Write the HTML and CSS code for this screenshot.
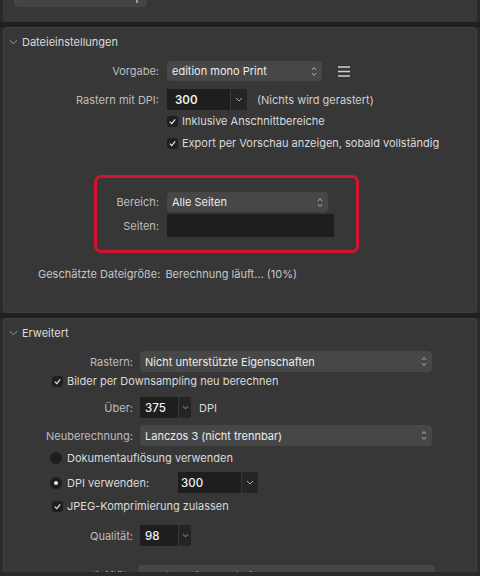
FILE: index.html
```html
<!DOCTYPE html>
<html lang="de">
<head>
<meta charset="utf-8">
<link rel="stylesheet" href="styles.css">
</head>
<body>
<div class="stub">
  <div class="stub-popup"><span class="stub-arrow"></span></div>
</div>
<div class="sep"></div>

<section class="panel p1">
  <div class="head"><svg class="chev" viewBox="0 0 10 6" width="9" height="6"><path d="M1 1 L5 5 L9 1" fill="none" stroke="#9a9a9a" stroke-width="1.1"/></svg>Dateieinstellungen</div>

  <div class="row r-vorgabe">
    <label class="lbl w1">Vorgabe:</label>
    <div class="popup pop-vorgabe"><span>edition mono Print</span><svg class="updown" viewBox="0 0 6 11" width="6" height="11"><path d="M1 4 L3 1.5 L5 4 M1 7 L3 9.5 L5 7" fill="none" stroke="#aaa" stroke-width="1"/></svg></div>
    <svg class="menu" viewBox="0 0 12 11" width="12" height="11"><path d="M0 1 H12 M0 5.5 H12 M0 10 H12" stroke="#cfcfcf" stroke-width="1.6"/></svg>
  </div>

  <div class="row r-dpi">
    <label class="lbl w1">Rastern mit DPI:</label>
    <div class="combo"><div class="field f-dpi">300</div><div class="drop"><svg viewBox="0 0 8 5" width="8" height="5"><path d="M1 1 L4 4 L7 1" fill="none" stroke="#aaa" stroke-width="1"/></svg></div></div>
    <span class="note">(Nichts wird gerastert)</span>
  </div>

  <div class="row cbrow indent1"><span class="cb"><svg viewBox="0 0 10 10" width="9" height="9"><path d="M2 5.2 L4.2 7.4 L8 2.6" fill="none" stroke="#e8e8e8" stroke-width="1.3"/></svg></span><span class="val">Inklusive Anschnittbereiche</span></div>
  <div class="row cbrow indent1"><span class="cb"><svg viewBox="0 0 10 10" width="9" height="9"><path d="M2 5.2 L4.2 7.4 L8 2.6" fill="none" stroke="#e8e8e8" stroke-width="1.3"/></svg></span><span class="val">Export per Vorschau anzeigen, sobald vollständig</span></div>

  <div class="redbox">
    <div class="row r-bereich">
      <label class="lbl w2">Bereich:</label>
      <div class="popup pop-bereich"><span>Alle Seiten</span><svg class="updown" viewBox="0 0 6 11" width="6" height="11"><path d="M1 4 L3 1.5 L5 4 M1 7 L3 9.5 L5 7" fill="none" stroke="#aaa" stroke-width="1"/></svg></div>
    </div>
    <div class="row r-seiten">
      <label class="lbl w2">Seiten:</label>
      <div class="field f-seiten"></div>
    </div>
  </div>

  <div class="size"><span class="lbl2">Geschätzte Dateigröße:</span><span class="lbl2">Berechnung läuft… (10%)</span></div>
</section>

<div class="sep"></div>

<section class="panel p2">
  <div class="head"><svg class="chev" viewBox="0 0 10 6" width="9" height="6"><path d="M1 1 L5 5 L9 1" fill="none" stroke="#9a9a9a" stroke-width="1.1"/></svg>Erweitert</div>

  <div class="row r-rastern">
    <label class="lbl w3">Rastern:</label>
    <div class="popup pop-wide"><span>Nicht unterstützte Eigenschaften</span><svg class="updown" viewBox="0 0 6 11" width="6" height="11"><path d="M1 4 L3 1.5 L5 4 M1 7 L3 9.5 L5 7" fill="none" stroke="#aaa" stroke-width="1"/></svg></div>
  </div>

  <div class="row cbrow2 r-down"><span class="cb"><svg viewBox="0 0 10 10" width="9" height="9"><path d="M2 5.2 L4.2 7.4 L8 2.6" fill="none" stroke="#e8e8e8" stroke-width="1.3"/></svg></span><span class="val">Bilder per Downsampling neu berechnen</span></div>

  <div class="row r-ueber">
    <label class="lbl w3">Über:</label>
    <div class="combo small"><div class="field f-small">375</div><div class="drop dsm"><svg viewBox="0 0 8 5" width="7" height="5"><path d="M1 1 L4 4 L7 1" fill="none" stroke="#aaa" stroke-width="1"/></svg></div></div>
    <span class="val unit">DPI</span>
  </div>

  <div class="row r-neu">
    <label class="lbl w3">Neuberechnung:</label>
    <div class="popup pop-wide"><span>Lanczos 3 (nicht trennbar)</span><svg class="updown" viewBox="0 0 6 11" width="6" height="11"><path d="M1 4 L3 1.5 L5 4 M1 7 L3 9.5 L5 7" fill="none" stroke="#aaa" stroke-width="1"/></svg></div>
  </div>

  <div class="row radrow r-rad1"><span class="radio"></span><span class="val">Dokumentauflösung verwenden</span></div>
  <div class="row radrow r-rad2"><span class="radio on"></span><span class="val rlabel">DPI verwenden:</span>
    <div class="combo"><div class="field f-dpi2">300</div><div class="drop"><svg viewBox="0 0 8 5" width="8" height="5"><path d="M1 1 L4 4 L7 1" fill="none" stroke="#aaa" stroke-width="1"/></svg></div></div>
  </div>

  <div class="row cbrow2 r-jpeg"><span class="cb"><svg viewBox="0 0 10 10" width="9" height="9"><path d="M2 5.2 L4.2 7.4 L8 2.6" fill="none" stroke="#e8e8e8" stroke-width="1.3"/></svg></span><span class="val">JPEG-Komprimierung zulassen</span></div>

  <div class="row r-qual">
    <label class="lbl w3">Qualität:</label>
    <div class="combo small"><div class="field f-small">98</div><div class="drop dsm"><svg viewBox="0 0 8 5" width="7" height="5"><path d="M1 1 L4 4 L7 1" fill="none" stroke="#aaa" stroke-width="1"/></svg></div></div>
  </div>

  <div class="row r-kompat">
    <label class="lbl w3k">Kompatibilität:</label>
    <div class="popup pop-kompat"><span>PDF/X-1a (Acrobat 4)</span></div>
  </div>
</section>
</body>
</html>
```

FILE: styles.css
```css
* { box-sizing: border-box; }
html, body { margin: 0; padding: 0; }
body {
  width: 480px;
  height: 576px;
  overflow: hidden;
  background: #2a2a2a;
  font-family: Inter, "Noto Sans", sans-serif;
  font-size: 11px;
  color: #e4e4e4;
}

.stub {
  height: 22px;
  margin-left: 3px;
  margin-right: 3px;
  background: #373737;
  padding-left: 11px;
}
.stub-popup {
  width: 133px;
  height: 7px;
  background: #454545;
  border-radius: 0 0 4px 4px;
  position: relative;
}
.stub-arrow {
  position: absolute;
  right: 9px;
  top: 0;
  width: 2px;
  height: 3px;
  background: #9a9a9a;
}

.sep { height: 5px; background: #1f1f1f; }

.panel {
  margin: 0 3px;
  background: #373737;
  border: 1px solid #414141;
  border-radius: 4px;
  overflow: hidden;
}
.p1 { height: 286px; }
.p2 { height: 254px; border-bottom-left-radius: 0; border-bottom-right-radius: 0; border-bottom: 0; }

.head {
  height: 27px;
  display: flex;
  align-items: center;
  padding-left: 5px;
  color: #dcdcdc;
  font-size: 11px;
}
.chev { margin-right: 4px; }

.row { display: flex; align-items: center; }
.lbl { text-align: right; color: #bdbdbd; flex: none; }
.w1 { width: 155px; margin-right: 8px; }
.w2 { width: 62px; margin-right: 8px; }
.w3 { width: 129px; margin-right: 7px; }
.w3k { width: 126px; margin-right: 8px; }
.val { color: #dadada; }

.popup {
  height: 20px;
  background: #474747;
  border-radius: 4px;
  display: flex;
  align-items: center;
  justify-content: space-between;
  padding: 0 5px 0 5px;
  color: #ececec;
  flex: none;
}
.updown { flex: none; }

.r-vorgabe { margin-top: 6px; height: 20px; }
.pop-vorgabe { width: 155px; }
.menu { margin-left: 16px; }

.r-dpi { margin-top: 8px; height: 21px; }
.combo { display: flex; height: 21px; flex: none; gap: 1px; }
.field {
  background: #1e1e1e;
  color: #f2f2f2;
  display: flex;
  align-items: center;
  padding-left: 8px;
  font-size: 11.5px;
  font-weight: 600;
}
.f-dpi { width: 63px; }
.drop {
  width: 16px;
  background: #252525;
  display: flex;
  align-items: center;
  justify-content: center;
}
.note { margin-left: 10px; color: #cfcfcf; }

.cbrow { height: 22px; }
.indent1 { padding-left: 163px; }
.cb {
  width: 11px;
  height: 11px;
  background: #1f1f1f;
  border-radius: 3px;
  display: flex;
  align-items: center;
  justify-content: center;
  margin-right: 4px;
  flex: none;
}

.redbox {
  margin-top: 21px;
  margin-left: 90px;
  width: 265px;
  height: 78px;
  border: 3px solid #d3132f;
  border-radius: 7px;
  padding-top: 14px;
}
.r-bereich { height: 20px; }
.pop-bereich { width: 161px; }
.r-seiten { margin-top: 2px; height: 23px; }
.f-seiten { width: 167px; height: 23px; }

.size {
  margin-top: 11px;
  height: 20px;
  display: flex;
  align-items: center;
  gap: 5px;
  padding-left: 34px;
  color: #c6c6c6;
}

.r-rastern { margin-top: 5px; height: 21px; }
.pop-wide { width: 292px; height: 21px; }
.cbrow2 { height: 20px; padding-left: 48px; }
.r-down { margin-top: -1px; }

.r-ueber { margin-top: 6px; height: 21px; }
.combo.small .field { width: 38px; padding-left: 5px; font-weight: 500; }
.dsm { width: 12px; }
.unit { margin-left: 8px; }

.r-neu { margin-top: 7px; height: 21px; }

.radrow { padding-left: 46px; }
.r-rad1 { margin-top: 2px; height: 20px; }
.r-rad2 { margin-top: 4px; height: 21px; }
.radio {
  width: 12px;
  height: 12px;
  border-radius: 50%;
  background: #1d1d1d;
  margin-right: 5px;
  flex: none;
  display: flex;
  align-items: center;
  justify-content: center;
}
.radio.on::after {
  content: "";
  width: 4px;
  height: 4px;
  border-radius: 50%;
  background: #e8e8e8;
}
.rlabel { width: 111px; }
.f-dpi2 { width: 63px; font-weight: 500; padding-left: 3px; }

.r-jpeg { margin-top: 3px; height: 20px; }
.r-qual { margin-top: 9px; height: 21px; }

.r-kompat { margin-top: 19px; height: 22px; align-items: flex-start; }
.r-kompat .lbl { padding-top: 4px; }
.pop-kompat { width: 297px; height: 22px; color: #d0d0d0; }
```
